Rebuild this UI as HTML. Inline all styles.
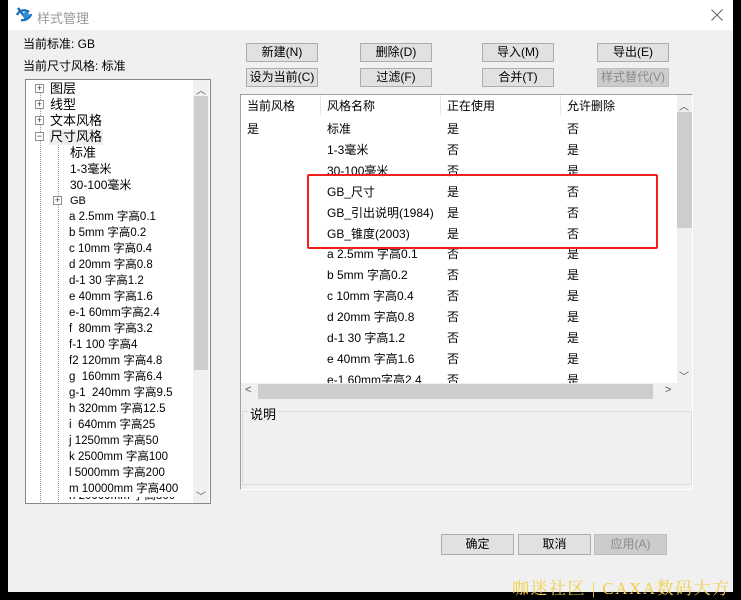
<!DOCTYPE html>
<html><head><meta charset="utf-8"><style>
*{margin:0;padding:0;box-sizing:border-box}
body{width:741px;height:600px;background:#000;position:relative;overflow:hidden;font-family:"Liberation Sans","Noto Sans CJK SC",sans-serif;font-size:12px;color:#000}
.a{position:absolute;white-space:nowrap}
.btn{position:absolute;height:19px;width:72px;background:#e1e1e1;border:1px solid #adadad;text-align:center;line-height:17px;font-size:12px}
.dis{color:#8a8a8a;background:#cccccc;border-color:#bfbfbf}
.t{position:absolute;white-space:nowrap;line-height:16px;font-size:12px}
.r{position:absolute;white-space:nowrap;font-size:12px;line-height:21px}
.pm{position:absolute;width:9px;height:9px;border:1px solid #919191;background:#fff;font-size:9px;line-height:7px;text-align:center;color:#333}
</style></head><body>
<div class="a" style="left:8px;top:0;width:725px;height:592px;background:#f0f0f0"></div>
<div class="a" style="left:8px;top:0;width:725px;height:30px;background:#fff"></div>
<svg class="a" style="left:15px;top:6px" width="20" height="18" viewBox="0 0 20 18"><path d="M3 2 L12 14 M2 9 C4 4 10 3 14 6 M6 14 C10 15 15 12 16 8" stroke="#1a6fb8" stroke-width="2.4" fill="none"/><circle cx="11" cy="9" r="3" fill="#2d8fd8"/></svg>
<div class="a" style="left:37px;top:8px;color:#999;font-size:13px">样式管理</div>
<svg class="a" style="left:711px;top:9px" width="12" height="12" viewBox="0 0 12 12"><path d="M0.5 0.5 L11.5 11.5 M11.5 0.5 L0.5 11.5" stroke="#666" stroke-width="1"/></svg>
<div class="a" style="left:23px;top:35px">当前标准: GB</div>
<div class="a" style="left:23px;top:57px">当前尺寸风格: 标准</div>

<div class="a" style="left:25px;top:79px;width:186px;height:425px;background:#fff;border:1px solid #828790"></div>
<div class="a" style="left:193px;top:80px;width:16px;height:423px;background:#f0f0f0"></div>
<div class="a" style="left:194px;top:96px;width:14px;height:274px;background:#cdcdcd"></div>
<div class="a" style="left:196px;top:82px;font-size:10px;color:#555">︿</div>
<div class="a" style="left:196px;top:488px;font-size:10px;color:#555">﹀</div>
<div class="a" style="left:40px;top:92px;height:412px;border-left:1px dotted #999"></div>
<div class="a" style="left:58px;top:144px;height:360px;border-left:1px dotted #999"></div>
<div class="pm" style="left:35px;top:84px">+</div>
<div class="pm" style="left:35px;top:100px">+</div>
<div class="pm" style="left:35px;top:116px">+</div>
<div class="pm" style="left:35px;top:132px">−</div>
<div class="pm" style="left:53px;top:196px">+</div>
<div class="t" style="left:50px;top:81px;font-size:13px">图层</div>
<div class="t" style="left:50px;top:97px;font-size:13px">线型</div>
<div class="t" style="left:50px;top:113px;font-size:13px">文本风格</div>
<div class="t" style="left:49px;top:129px;font-size:13px;background:#f0f0f0;padding:0 1px">尺寸风格</div>
<div class="t" style="left:70px;top:145px;font-size:13px">标准</div>
<div class="t" style="left:70px;top:161px">1-3毫米</div>
<div class="t" style="left:70px;top:177px">30-100毫米</div>
<div class="t" style="left:70px;top:193px;font-size:11px">GB</div>
<div class="t" style="left:69px;top:209px;font-size:11.5px;line-height:16px">a 2.5mm 字高0.1<br>b 5mm 字高0.2<br>c 10mm 字高0.4<br>d 20mm 字高0.8<br>d-1 30 字高1.2<br>e 40mm 字高1.6<br>e-1 60mm字高2.4<br>f &nbsp;80mm 字高3.2<br>f-1 100 字高4<br>f2 120mm 字高4.8<br>g &nbsp;160mm 字高6.4<br>g-1 &nbsp;240mm 字高9.5<br>h 320mm 字高12.5<br>i &nbsp;640mm 字高25<br>j 1250mm 字高50<br>k 2500mm 字高100<br>l 5000mm 字高200<br>m 10000mm 字高400<br></div>
<div class="a" style="left:69px;top:497px;width:120px;height:6px;overflow:hidden"><div style="font-size:11.5px;line-height:16px;margin-top:-9px">n 20000mm 字高800</div></div>

<div class="btn" style="left:246px;top:43px">新建(N)</div>
<div class="btn" style="left:360px;top:43px">删除(D)</div>
<div class="btn" style="left:482px;top:43px">导入(M)</div>
<div class="btn" style="left:597px;top:43px">导出(E)</div>
<div class="btn" style="left:246px;top:68px">设为当前(C)</div>
<div class="btn" style="left:360px;top:68px">过滤(F)</div>
<div class="btn" style="left:482px;top:68px">合并(T)</div>
<div class="btn dis" style="left:597px;top:68px">样式替代(V)</div>

<div class="a" style="left:240px;top:94px;width:453px;height:396px;border:1px solid #a0a0a0;border-right-color:#fff;border-bottom-color:#fff"></div>
<div class="a" style="left:241px;top:95px;width:436px;height:288px;background:#fff"></div>
<div class="a" style="left:320px;top:95px;height:20px;border-left:1px solid #e5e5e5"></div>
<div class="a" style="left:440px;top:95px;height:20px;border-left:1px solid #e5e5e5"></div>
<div class="a" style="left:560px;top:95px;height:20px;border-left:1px solid #e5e5e5"></div>
<div class="a" style="left:677px;top:95px;width:15px;height:288px;background:#f0f0f0"></div>
<div class="a" style="left:677px;top:112px;width:15px;height:116px;background:#cdcdcd"></div>
<div class="a" style="left:679px;top:98px;font-size:10px;color:#555">︿</div>
<div class="a" style="left:679px;top:368px;font-size:10px;color:#555">﹀</div>
<div class="a" style="left:241px;top:383px;width:436px;height:16px;background:#f0f0f0"></div>
<div class="a" style="left:258px;top:384px;width:395px;height:15px;background:#cdcdcd"></div>
<div class="a" style="left:245px;top:384px;font-size:11px;color:#555">&lt;</div>
<div class="a" style="left:665px;top:384px;font-size:11px;color:#555">&gt;</div>
<div class="a" style="left:241px;top:95px;width:436px;height:288px;overflow:hidden">
<div class="r" style="left:6px;top:1px">当前风格</div>
<div class="r" style="left:86px;top:1px">风格名称</div>
<div class="r" style="left:206px;top:1px">正在使用</div>
<div class="r" style="left:326px;top:1px">允许删除</div>
<div class="r" style="left:6px;top:24px">是</div>
<div class="r" style="left:86px;top:24px;line-height:20.9px">标准<br>1-3毫米<br>30-100毫米<br>GB_尺寸<br>GB_引出说明(1984)<br>GB_锥度(2003)<br>a 2.5mm 字高0.1<br>b 5mm 字高0.2<br>c 10mm 字高0.4<br>d 20mm 字高0.8<br>d-1 30 字高1.2<br>e 40mm 字高1.6<br>e-1 60mm字高2.4</div>
<div class="r" style="left:206px;top:24px;line-height:20.9px">是<br>否<br>否<br>是<br>是<br>是<br>否<br>否<br>否<br>否<br>否<br>否<br>否</div>
<div class="r" style="left:326px;top:24px;line-height:20.9px">否<br>是<br>是<br>否<br>否<br>否<br>是<br>是<br>是<br>是<br>是<br>是<br>是</div>
</div>
<div class="a" style="left:307px;top:174px;width:351px;height:75px;border:2px solid #f0201a;border-radius:2px"></div>

<div class="a" style="left:242px;top:411px;width:450px;height:74px;border:1px solid #dcdcdc"></div>
<div class="a" style="left:248px;top:404px;background:#f0f0f0;padding:0 2px;font-size:13px">说明</div>

<div class="btn" style="left:441px;top:534px;width:73px;height:21px;line-height:19px">确定</div>
<div class="btn" style="left:518px;top:534px;width:73px;height:21px;line-height:19px">取消</div>
<div class="btn dis" style="left:594px;top:534px;width:73px;height:21px;line-height:19px">应用(A)</div>
<div class="a" style="left:512px;top:574px;color:#f2cf4a;font-family:'Liberation Serif','Noto Serif CJK SC',serif;font-size:17px;letter-spacing:1.5px">咖迷社区 | CAXA数码大方</div>
</body></html>
